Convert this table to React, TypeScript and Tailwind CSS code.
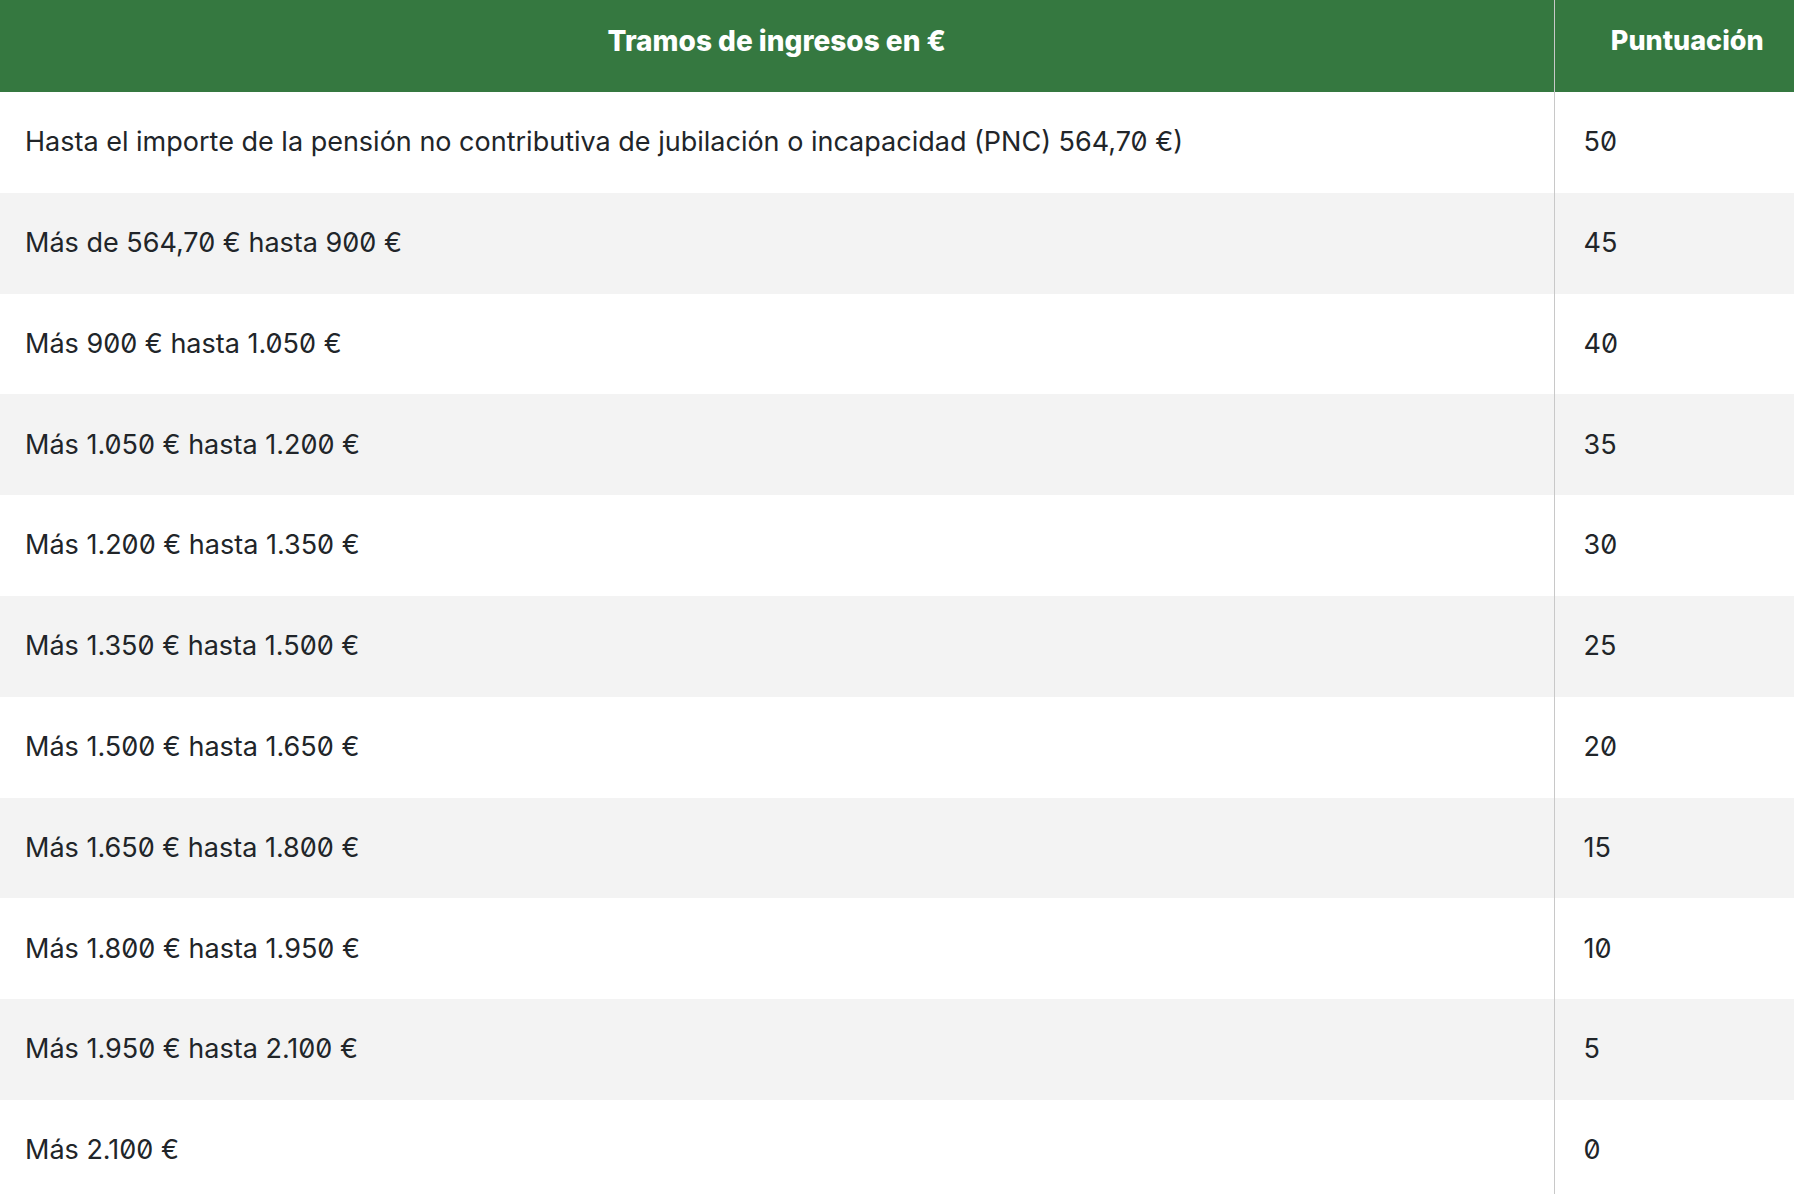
import React from "react";

const rows: [string, string][] = [
  ["Hasta el importe de la pensión no contributiva de jubilación o incapacidad (PNC) 564,70 €)", "50"],
  ["Más de 564,70 € hasta 900 €", "45"],
  ["Más 900 € hasta 1.050 €", "40"],
  ["Más 1.050 € hasta 1.200 €", "35"],
  ["Más 1.200 € hasta 1.350 €", "30"],
  ["Más 1.350 € hasta 1.500 €", "25"],
  ["Más 1.500 € hasta 1.650 €", "20"],
  ["Más 1.650 € hasta 1.800 €", "15"],
  ["Más 1.800 € hasta 1.950 €", "10"],
  ["Más 1.950 € hasta 2.100 €", "5"],
  ["Más 2.100 €", "0"],
];

const App: React.FC = () => {
  return (
    <div className="w-[1794px] h-[1194px] overflow-hidden bg-white font-['Inter',sans-serif] text-[#212529]">
      <table className="w-[1820px] border-collapse table-fixed">
        <colgroup>
          <col className="w-[1554px]" />
          <col className="w-[266px]" />
        </colgroup>
        <thead>
          <tr className="bg-[#357840] text-white h-[92px]">
            <th className="border-r border-[#c8c8c8] text-center text-[28px] font-extrabold px-[22px] pb-[10px]">
              Tramos de ingresos en €
            </th>
            <th className="text-center text-[27px] font-extrabold pb-[10px]">Puntuación</th>
          </tr>
        </thead>
        <tbody>
          {rows.map(([label, score], i) => (
            <tr key={i} className={`h-[100.8px] ${i % 2 === 1 ? "bg-[#f3f3f3]" : "bg-white"}`}>
              <td className="border-r border-[#c8c8c8] pl-[25px] text-[27px] slashed-zero">{label}</td>
              <td className="pl-[29px] text-[27px] slashed-zero">{score}</td>
            </tr>
          ))}
        </tbody>
      </table>
    </div>
  );
};

export default App;
